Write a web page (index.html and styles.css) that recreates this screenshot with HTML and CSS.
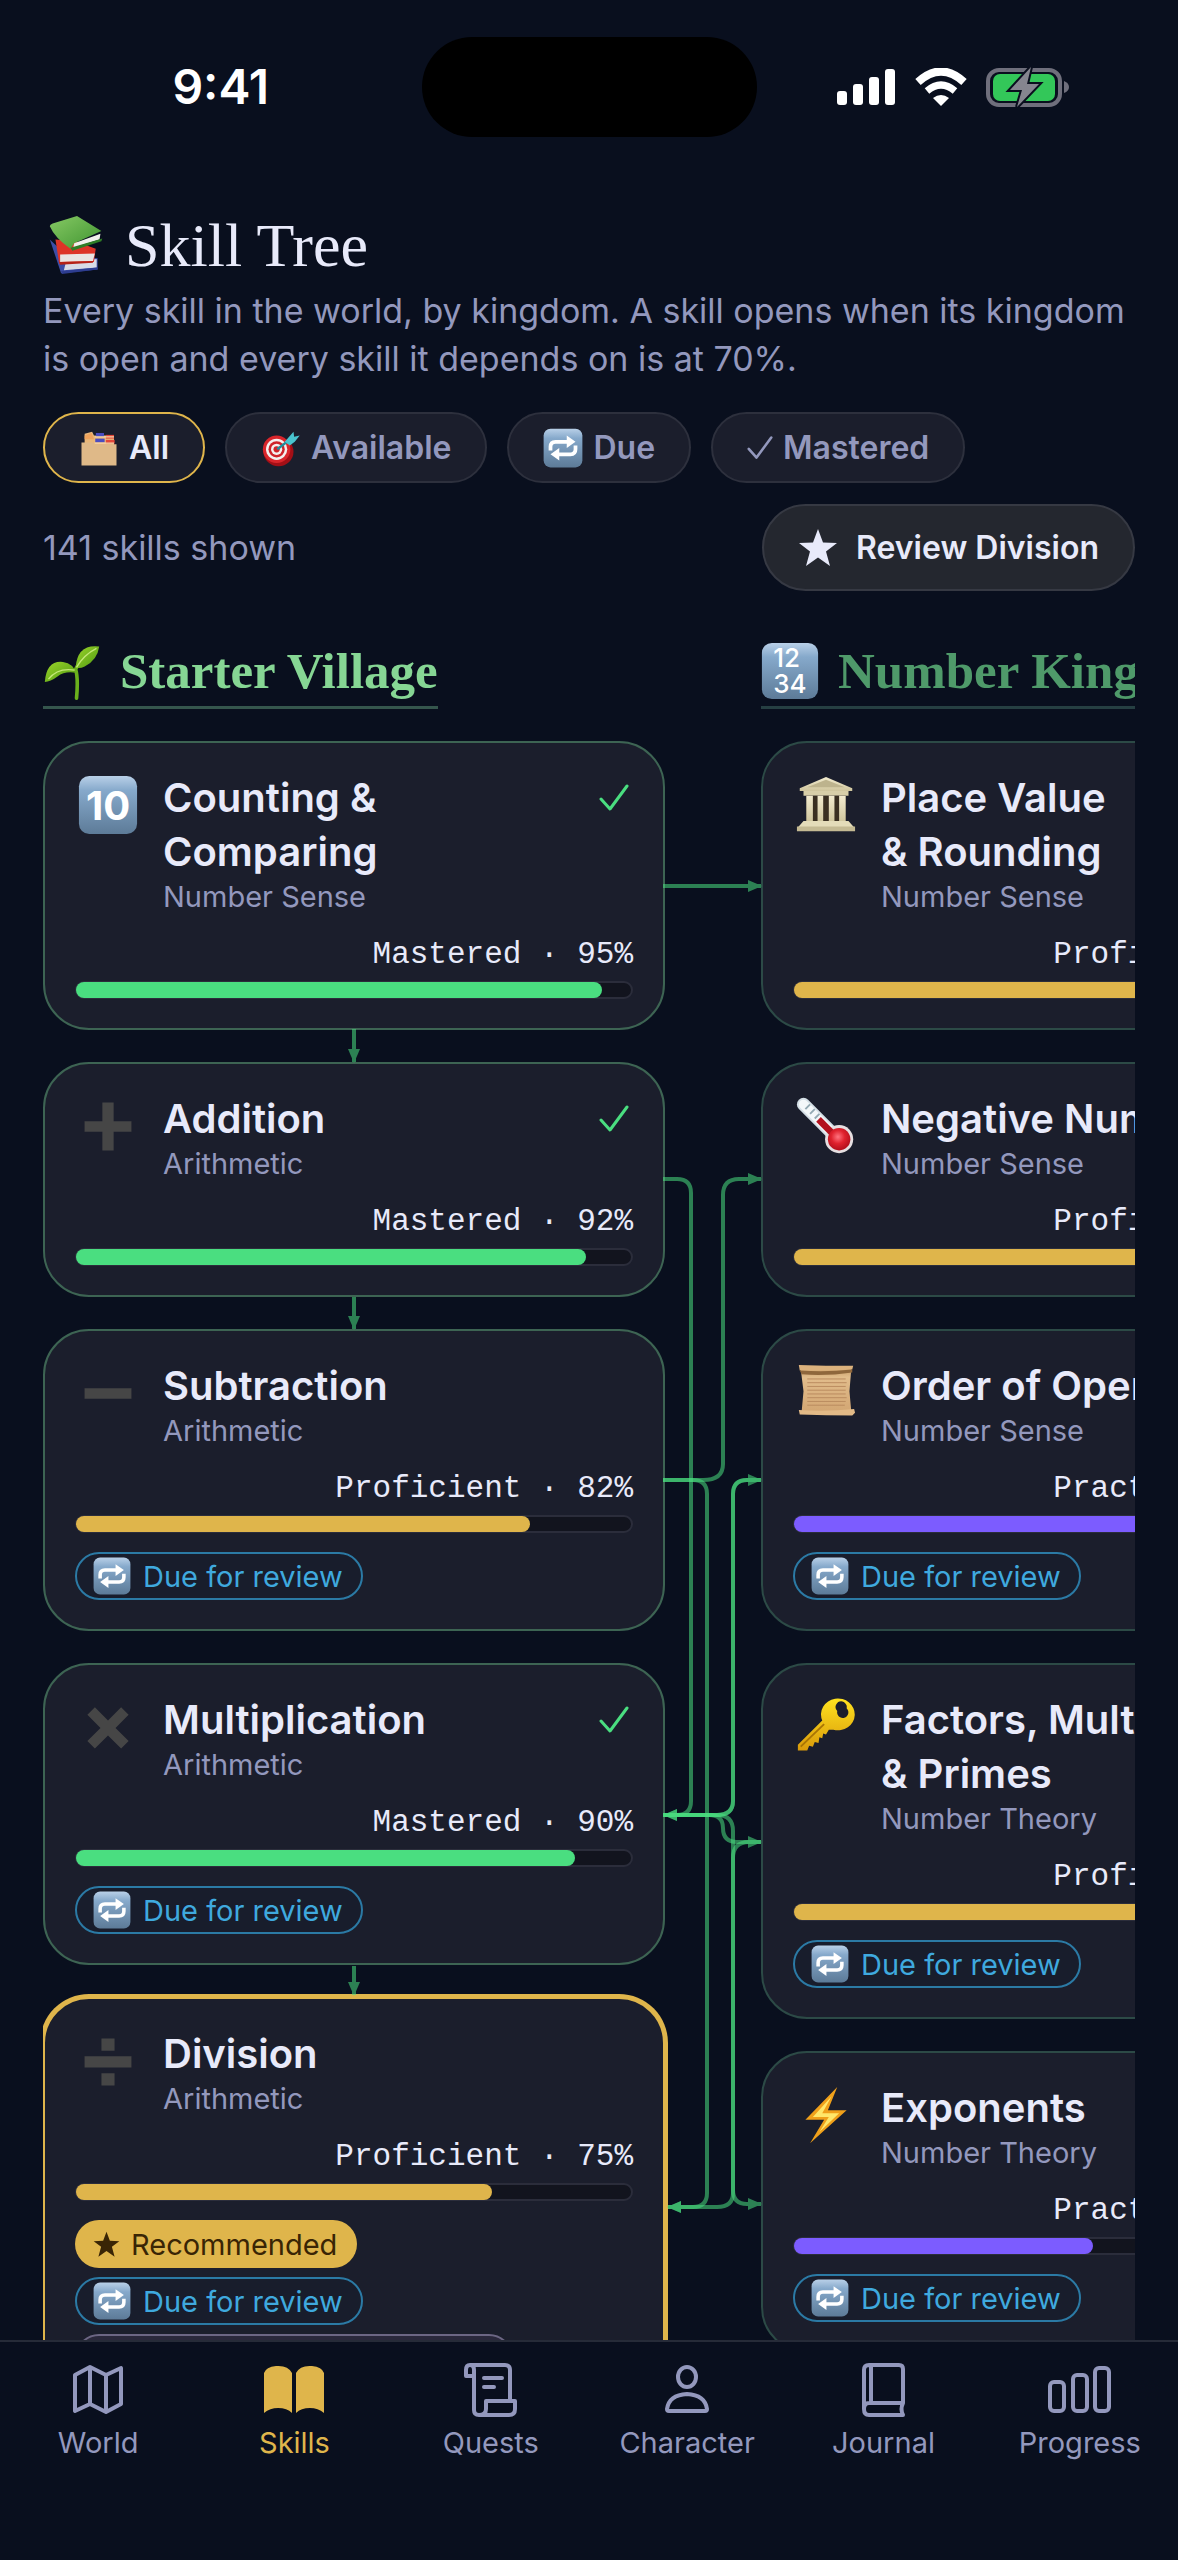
FILE: index.html
```html
<!DOCTYPE html>
<html lang="en">
<head>
<meta charset="utf-8">
<meta name="viewport" content="width=device-width, initial-scale=1">
<title>Skill Tree</title>
<link rel="stylesheet" href="styles.css">
</head>
<body>
<svg class="sprite" aria-hidden="true">
  <defs>
    <linearGradient id="tile" x1="0" y1="0" x2="0" y2="1"><stop offset="0" stop-color="#b9d0e8"/><stop offset=".25" stop-color="#86a9cb"/><stop offset="1" stop-color="#5d7b98"/></linearGradient>
    <linearGradient id="leaf" x1="0" y1="0" x2="1" y2="1"><stop offset="0" stop-color="#9bd42a"/><stop offset="1" stop-color="#4f9a12"/></linearGradient>
    <linearGradient id="cover" x1="0" y1="0" x2="1" y2="1"><stop offset="0" stop-color="#86c964"/><stop offset="1" stop-color="#3f9430"/></linearGradient>
    <linearGradient id="gold" x1="0" y1="0" x2="0" y2="1"><stop offset="0" stop-color="#ffe21f"/><stop offset="1" stop-color="#d99a0a"/></linearGradient>
    <linearGradient id="stone" x1="0" y1="0" x2="0" y2="1"><stop offset="0" stop-color="#f3ecd0"/><stop offset="1" stop-color="#cfc59d"/></linearGradient>
    <linearGradient id="paper" x1="0" y1="0" x2="0" y2="1"><stop offset="0" stop-color="#c79c68"/><stop offset=".2" stop-color="#e2bd8c"/><stop offset="1" stop-color="#d2a673"/></linearGradient>
    <radialGradient id="bulb" cx=".45" cy=".4" r=".6"><stop offset="0" stop-color="#ff7480"/><stop offset=".5" stop-color="#e0222e"/><stop offset="1" stop-color="#b30f1c"/></radialGradient>
    <marker id="arrow" markerWidth="14" markerHeight="12" refX="13" refY="6" orient="auto" markerUnits="userSpaceOnUse"><path d="M0 0L14 6L0 12z" fill="#4ade80"/></marker>
  </defs>
  <symbol id="i-books" viewBox="0 0 64 64">
    <path d="M3 26L15 62L54 58L54 46L20 42z" fill="#3c4da6"/><path d="M20 51L53 47L53 56L18 59z" fill="#d8dbe6"/><path d="M15 60L54 56L54 58L16 63z" fill="#2d3c8f"/>
    <path d="M9 26L13 52L50 50L52 36L30 28z" fill="#dd3427"/><path d="M14 42L51 41L49 49L14 50z" fill="#e9e4e2"/><path d="M13 50L49 49L49 51L14 53z" fill="#b52218"/>
    <path d="M3 12Q3 10 6 9L32 1L58 17L29 30L25 36Q8 24 3 12z" fill="url(#cover)"/><path d="M29 30L57 20L56 26L28 35z" fill="#f1f1ec"/><path d="M25 35L59 25L58 28L27 38z" fill="#2f7d26"/>
  </symbol>
  <symbol id="i-dividers" viewBox="0 0 64 64">
    <path d="M9 9L21 6L24 12L56 12L56 28H9z" fill="#e9b779"/><path d="M9 12L20 8L24 18H9z" fill="#f0a35c"/><path d="M27 8h13v6H27z" fill="#4a4cc0"/><path d="M43 11h13v6H43z" fill="#e2473a"/><path d="M26 17h15v6H26z" fill="#4a4cc0"/><path d="M43 19h14v6H43z" fill="#e2473a"/><path d="M25 14H56M25 24H56" stroke="#f5d6ab" stroke-width="2"/>
    <path d="M4 23H22L26 26H60V60H4z" fill="#dfb988"/>
  </symbol>
  <symbol id="i-target" viewBox="0 0 64 64">
    <ellipse cx="28" cy="38" rx="24" ry="23" fill="#a30f16"/><circle cx="25" cy="34" r="22" fill="#d9252b"/><circle cx="25" cy="34" r="17" fill="#f4efee"/><circle cx="25" cy="34" r="13" fill="#cf2329"/><circle cx="25" cy="34" r="9" fill="#f4efee"/><circle cx="25" cy="34" r="5" fill="#cf2329"/>
    <path d="M26 34L48 17" stroke="#1f8d9c" stroke-width="4"/><path d="M38 22L52 6L53 14L62 12L54 22L46 28z" fill="#49c4cf"/>
  </symbol>
  <symbol id="i-repeat" viewBox="0 0 64 64">
    <rect x="1" y="1" width="62" height="62" rx="11" fill="url(#tile)"/>
    <g fill="none" stroke="#fff" stroke-width="6"><path d="M12 36V30Q12 22 20 22H40M52 28V34Q52 42 44 42H24"/></g><path d="M38 12L52 22L38 32zM26 32L12 42L26 52z" fill="#fff"/>
  </symbol>
  <symbol id="i-check" viewBox="0 0 30 28"><path d="M2 15L11 25L28 2" fill="none" stroke="currentColor" stroke-width="3" stroke-linecap="round" stroke-linejoin="round"/></symbol>
  <symbol id="i-star" viewBox="0 0 40 40"><path d="M20 1L25 14.500L39 15L28 23.500L32 38L20 29.500L8 38L12 23.500L1 15L15 14.500z" fill="currentColor"/></symbol>
  <symbol id="i-seedling" viewBox="0 0 64 64">
    <path d="M37 62Q39 40 36 30Q40 22 45 18" fill="none" stroke="#6ab01c" stroke-width="4" stroke-linecap="round"/>
    <path d="M62 5Q38 2 36 28Q40 30 46 27Q60 20 62 5z" fill="url(#leaf)"/><path d="M2 44Q4 20 22 22Q34 24 36 34Q24 32 16 38Q8 44 2 44z" fill="url(#leaf)"/>
    <path d="M59 7Q45 14 37 28M6 41Q16 28 35 31" fill="none" stroke="#c4e878" stroke-width="1.500"/>
  </symbol>
  <symbol id="i-tile" viewBox="0 0 64 64"><rect x="1" y="1" width="62" height="62" rx="11" fill="url(#tile)"/></symbol>
  <symbol id="i-plus" viewBox="0 0 64 64"><path d="M26 7h12v20h19v11H38v20H26V38H7V27h19z" fill="#464646"/></symbol>
  <symbol id="i-minus" viewBox="0 0 64 64"><path d="M7 27h50v11H7z" fill="#464646"/></symbol>
  <symbol id="i-times" viewBox="0 0 64 64"><path d="M18 11L32 25L46 11L54 19L40 33L54 47L46 55L32 41L18 55L10 47L24 33L10 19z" fill="#464646"/></symbol>
  <symbol id="i-divide" viewBox="0 0 64 64"><path d="M25 8h14v13H25zM7 27h50v12H7zM25 45h14v13H25z" fill="#464646"/></symbol>
  <symbol id="i-temple" viewBox="0 0 64 64">
    <path d="M4 14L32 2L60 14V17H4z" fill="url(#stone)"/><path d="M12 13L32 5L52 13z" fill="#bdb38d"/><path d="M8 17H56V22H8z" fill="#d8cfa9"/>
    <path d="M11 22H53V52H11z" fill="#3a2f22"/>
    <path d="M11 22h7v28h-7zM23 22h6v28h-6zM35 22h6v28h-6zM46 22h7v28h-7z" fill="url(#stone)"/><path d="M8 49H56L63 57H1z" fill="#e4dcb9"/><path d="M1 55H63V60H1z" fill="#c4ba93"/>
  </symbol>
  <symbol id="i-thermo" viewBox="0 0 64 64">
    <path d="M8 9L42 43" stroke="#d4dfe6" stroke-width="14" stroke-linecap="round"/><path d="M8 9L40 41" stroke="#f4f8fa" stroke-width="10" stroke-linecap="round"/><circle cx="46" cy="46" r="15" fill="#e6dfe1"/><path d="M24 25L42 43" stroke="#b3121e" stroke-width="7"/><circle cx="46" cy="46" r="12" fill="url(#bulb)"/><path d="M15 9L10 14M20 14L15 19M25 19L20 24" stroke="#93a9b3" stroke-width="2"/>
  </symbol>
  <symbol id="i-scroll" viewBox="0 0 64 64">
    <path d="M5 6H59L57 30L59 52H6L8 30z" fill="url(#paper)"/><path d="M3 2Q32 3 61 3L60 7Q32 9 4 8z" fill="#dcb27d"/><path d="M4 8Q32 10 60 7V10Q32 14 6 12z" fill="#8f673c"/><path d="M3 50Q32 52 62 49L63 53L60 56Q32 56 4 55z" fill="#e2ba87"/>
    <path d="M12 17H53M12 21H54M12 25H53M12 29H53M12 33H53M12 37H54M12 41H53M12 45H52" stroke="#b98a5e" stroke-width="1"/>
  </symbol>
  <symbol id="i-key" viewBox="0 0 64 64">
    <path fill-rule="evenodd" d="M28 25A18 17 0 1 1 40 35L35 35L32 40L29 39L28 44L25 43L24 49L20 48L18 53L14 52L12 57L2 57V51z M54 12A6 6 0 1 0 44 15A6 6 0 1 0 54 12z" fill="url(#gold)"/><path d="M5 53L30 29" stroke="#a97405" stroke-width="2"/>
  </symbol>
  <symbol id="i-bolt" viewBox="0 0 64 64"><path d="M44 2L10 37H30L15 62L54 27H34z" fill="#f0a01a"/><path d="M38 12L18 34H35L25 50L46 30H28z" fill="#ffe76a"/></symbol>
  <symbol id="n-map" viewBox="0 0 60 60"><path d="M7 16L22 8L38 16L53 9V45L38 53L22 45L7 52zM22 8V45M38 16V53" fill="none" stroke="currentColor" stroke-width="4" stroke-linejoin="round"/></symbol>
  <symbol id="n-open" viewBox="0 0 60 60"><path d="M0 14Q2 8 12 7Q24 6 28 14V54Q23 49 14 49Q6 49 0 54zM60 14Q58 8 48 7Q36 6 32 14V54Q37 49 46 49Q54 49 60 54z" fill="currentColor"/></symbol>
  <symbol id="n-scroll" viewBox="0 0 60 60"><path d="M13 17H5V11Q5 6 9 6H44Q49 6 49 11V42M9 6Q13 6 13 11V51Q13 56 18 56H48Q54 56 54 50V42H25V50Q25 56 18 56M23 19H41M23 28H33" fill="none" stroke="currentColor" stroke-width="4" stroke-linejoin="round" stroke-linecap="round"/></symbol>
  <symbol id="n-person" viewBox="0 0 60 60"><ellipse cx="30" cy="18" rx="9" ry="10" fill="none" stroke="currentColor" stroke-width="4"/><path d="M10 50Q12 36 30 35Q48 36 50 50Q50 52 48 52H12Q10 52 10 50z" fill="none" stroke="currentColor" stroke-width="4"/></symbol>
  <symbol id="n-book" viewBox="0 0 60 60"><path d="M50 44H16Q11 44 11 50Q11 56 16 56H50Q47 50 50 44V10Q50 6 46 6H16Q11 6 11 11V50M18 6V44" fill="none" stroke="currentColor" stroke-width="4" stroke-linejoin="round"/></symbol>
  <symbol id="n-bars" viewBox="0 0 64 60"><g fill="none" stroke="currentColor" stroke-width="4"><rect x="2" y="23" width="14" height="29" rx="4"/><rect x="25" y="16" width="14" height="36" rx="4"/><rect x="47" y="9" width="14" height="43" rx="4"/></g></symbol>
</svg>

<div class="app">
  <header class="status">
    <time class="status-time">9:41</time>
    <div class="island"></div>
    <div class="status-icons">
      <svg width="60" height="38" viewBox="0 0 60 38" fill="#fff" aria-label="Signal"><rect x="1" y="23" width="10" height="14" rx="3"/><rect x="17" y="16" width="10" height="21" rx="3"/><rect x="33" y="9" width="10" height="28" rx="3"/><rect x="49" y="1" width="10" height="36" rx="3"/></svg>
      <svg width="52" height="38" viewBox="0 0 52 38" aria-label="Wi-Fi"><path d="M3 14Q26 -7 49 14" fill="none" stroke="#fff" stroke-width="8"/><path d="M12 23Q26 11 40 23" fill="none" stroke="#fff" stroke-width="7"/><path d="M18 30Q26 24 34 30L26 38z" fill="#fff"/></svg>
      <svg width="84" height="40" viewBox="0 0 84 40" aria-label="Battery charging"><rect x="2" y="3" width="72" height="35" rx="11" fill="none" stroke="#6f6f7c" stroke-width="4"/><path d="M78 14q5 2 5 6t-5 6z" fill="#6f6f7c"/><rect x="7" y="7" width="62" height="27" rx="7" fill="#33c759"/><path d="M45 0L24 23H36L31 40L53 17H41z" fill="#85858f" stroke="#0a0f1e" stroke-width="4" paint-order="stroke"/></svg>
    </div>
  </header>

  <main class="page">
    <h1 class="title"><svg class="title-icon"><use href="#i-books"/></svg>Skill Tree</h1>
    <p class="lead">Every skill in the world, by kingdom. A skill opens when its kingdom is open and every skill it depends on is at 70%.</p>
    <div class="filters">
      <button class="filter is-active" aria-pressed="true"><svg class="filter-icon"><use href="#i-dividers"/></svg>All</button>
      <button class="filter"><svg class="filter-icon"><use href="#i-target"/></svg>Available</button>
      <button class="filter"><svg class="filter-icon"><use href="#i-repeat"/></svg>Due</button>
      <button class="filter"><svg class="filter-check"><use href="#i-check"/></svg>Mastered</button>
    </div>
    <div class="summary">
      <span>141 skills shown</span>
      <button class="review"><svg class="review-icon"><use href="#i-star"/></svg>Review Division</button>
    </div>

    <div class="viewport">
      <div class="tree">
        <section class="kingdom">
          <h2 class="kingdom-title"><svg class="kingdom-icon"><use href="#i-seedling"/></svg>Starter Village</h2>
          <article class="card">
            <div class="card-head"><span class="glyph"><svg><use href="#i-tile"/></svg><b>10</b></span><div class="names"><h3>Counting &amp; Comparing</h3><p>Number Sense</p></div><svg class="done"><use href="#i-check"/></svg></div>
            <p class="level">Mastered · 95%</p><div class="track"><div class="fill green" style="width:95%"></div></div>
          </article>
          <article class="card">
            <div class="card-head"><span class="glyph"><svg><use href="#i-plus"/></svg></span><div class="names"><h3>Addition</h3><p>Arithmetic</p></div><svg class="done"><use href="#i-check"/></svg></div>
            <p class="level">Mastered · 92%</p><div class="track"><div class="fill green" style="width:92%"></div></div>
          </article>
          <article class="card">
            <div class="card-head"><span class="glyph"><svg><use href="#i-minus"/></svg></span><div class="names"><h3>Subtraction</h3><p>Arithmetic</p></div></div>
            <p class="level">Proficient · 82%</p><div class="track"><div class="fill gold" style="width:82%"></div></div>
            <div class="tags"><span class="tag due"><svg class="tag-icon"><use href="#i-repeat"/></svg>Due for review</span></div>
          </article>
          <article class="card">
            <div class="card-head"><span class="glyph"><svg><use href="#i-times"/></svg></span><div class="names"><h3>Multiplication</h3><p>Arithmetic</p></div><svg class="done"><use href="#i-check"/></svg></div>
            <p class="level">Mastered · 90%</p><div class="track"><div class="fill green" style="width:90%"></div></div>
            <div class="tags"><span class="tag due"><svg class="tag-icon"><use href="#i-repeat"/></svg>Due for review</span></div>
          </article>
          <article class="card is-next">
            <div class="card-head"><span class="glyph"><svg><use href="#i-divide"/></svg></span><div class="names"><h3>Division</h3><p>Arithmetic</p></div></div>
            <p class="level">Proficient · 75%</p><div class="track"><div class="fill gold" style="width:75%"></div></div>
            <div class="tags"><span class="tag recommended"><svg class="tag-star"><use href="#i-star"/></svg>Recommended</span><span class="tag due"><svg class="tag-icon"><use href="#i-repeat"/></svg>Due for review</span><span class="tag more"></span></div>
          </article>
        </section>

        <section class="kingdom dim">
          <h2 class="kingdom-title"><span class="kingdom-tile"><svg class="kingdom-icon"><use href="#i-tile"/></svg><b>12<br>34</b></span>Number Kingdom</h2>
          <article class="card">
            <div class="card-head"><span class="glyph"><svg><use href="#i-temple"/></svg></span><div class="names"><h3>Place Value &amp;&nbsp;Rounding</h3><p>Number Sense</p></div></div>
            <p class="level">Proficient · 85%</p><div class="track"><div class="fill gold" style="width:85%"></div></div>
          </article>
          <article class="card">
            <div class="card-head"><span class="glyph"><svg><use href="#i-thermo"/></svg></span><div class="names"><h3>Negative Numbers</h3><p>Number Sense</p></div></div>
            <p class="level">Proficient · 80%</p><div class="track"><div class="fill gold" style="width:80%"></div></div>
          </article>
          <article class="card">
            <div class="card-head"><span class="glyph"><svg><use href="#i-scroll"/></svg></span><div class="names"><h3>Order of Operations</h3><p>Number Sense</p></div></div>
            <p class="level">Practicing · 68%</p><div class="track"><div class="fill purple" style="width:68%"></div></div>
            <div class="tags"><span class="tag due"><svg class="tag-icon"><use href="#i-repeat"/></svg>Due for review</span></div>
          </article>
          <article class="card">
            <div class="card-head"><span class="glyph"><svg><use href="#i-key"/></svg></span><div class="names"><h3>Factors, Multiples &amp;&nbsp;Primes</h3><p>Number Theory</p></div></div>
            <p class="level">Proficient · 78%</p><div class="track"><div class="fill gold" style="width:78%"></div></div>
            <div class="tags"><span class="tag due"><svg class="tag-icon"><use href="#i-repeat"/></svg>Due for review</span></div>
          </article>
          <article class="card">
            <div class="card-head"><span class="glyph"><svg><use href="#i-bolt"/></svg></span><div class="names"><h3>Exponents</h3><p>Number Theory</p></div></div>
            <p class="level">Practicing · 54%</p><div class="track"><div class="fill purple" style="width:54%"></div></div>
            <div class="tags"><span class="tag due"><svg class="tag-icon"><use href="#i-repeat"/></svg>Due for review</span></div>
          </article>
        </section>

        <svg class="links" width="1340" height="1700" viewBox="0 0 1340 1700" aria-hidden="true">
          <g transform="translate(-43 -641)">
            <path d="M354 1029V1062"/><path d="M354 1297V1329"/><path d="M354 1966V1995"/>
            <path d="M663 886H761"/>
            <path d="M663 1179H677Q691 1179 691 1193V1801Q691 1815 677 1815H664"/>
            <path d="M663 1480H693Q707 1480 707 1494V2193Q707 2207 693 2207H668"/>
            <path d="M663 1480H703Q723 1480 723 1464V1195Q723 1179 739 1179H761"/>
            <path d="M663 1815H717Q733 1815 733 1801V1494Q733 1480 747 1480H761"/>
            <path d="M663 1815H709Q723 1815 723 1828Q723 1842 737 1842H761"/>
            <path d="M663 1815H717Q733 1815 733 1831V2190Q733 2204 747 2204H761"/>
            <path d="M761 1842H749Q733 1842 733 1858V2193Q733 2207 717 2207H668"/>
            <path d="M761 1480H747Q733 1480 733 1494V1801Q733 1815 717 1815H664"/>
          </g>
        </svg>
      </div>
    </div>
  </main>

  <nav class="tabs">
    <a class="tab" href="#world"><svg><use href="#n-map"/></svg>World</a>
    <a class="tab is-current" href="#skills"><svg><use href="#n-open"/></svg>Skills</a>
    <a class="tab" href="#quests"><svg><use href="#n-scroll"/></svg>Quests</a>
    <a class="tab" href="#character"><svg><use href="#n-person"/></svg>Character</a>
    <a class="tab" href="#journal"><svg><use href="#n-book"/></svg>Journal</a>
    <a class="tab" href="#progress"><svg class="wide"><use href="#n-bars"/></svg>Progress</a>
  </nav>
</div>
</body>
</html>
```
FILE: styles.css
```css
:root {
  --bg: #090f1e;
  --card: #1b1e2c;
  --text: #e8eafa;
  --muted: #9398bd;
  --gold: #dfb54b;
  --green: #4ade80;
  --sky: #3fa9de;
}

* { box-sizing: border-box; }

body {
  margin: 0;
  background: var(--bg);
  color: var(--text);
  font-family: Inter, "Liberation Sans", sans-serif;
}

h1, h2, h3, p { margin: 0; }

button { font: inherit; cursor: pointer; }

.sprite { position: absolute; width: 0; height: 0; }

.app {
  display: flex;
  flex-direction: column;
  height: 100vh;
  overflow: hidden;
}

/* Status bar */
.status {
  display: grid;
  grid-template-columns: 1fr auto 1fr;
  align-items: center;
  justify-items: center;
  flex: none;
  height: 173px;
}

.status-time {
  padding-left: 20px;
  color: #fff;
  font-size: 48px;
  font-weight: 600;
}

.island {
  width: 335px;
  height: 100px;
  border-radius: 50px;
  background: #000;
}

.status-icons {
  display: flex;
  align-items: center;
  gap: 19px;
  padding-right: 28px;
}

/* Page header */
.page {
  display: flex;
  flex-direction: column;
  flex: 1;
  min-height: 0;
  padding: 36px 43px 0;
}

.title {
  display: flex;
  align-items: center;
  gap: 18px;
  font: 400 62px/72px "Liberation Serif", serif;
}

.title-icon { width: 60px; height: 60px; margin-left: 4px; }

.lead {
  margin-top: 6px;
  color: var(--muted);
  font-size: 34px;
  line-height: 48px;
}

.filters {
  display: flex;
  gap: 20px;
  margin-top: 29px;
}

.filter {
  display: flex;
  align-items: center;
  gap: 10px;
  height: 71px;
  padding: 0 34px;
  border: 2px solid #2d303d;
  border-radius: 36px;
  background: var(--card);
  color: var(--muted);
  font-size: 32px;
  font-weight: 600;
}

.filter.is-active { border-color: var(--gold); color: var(--text); }

.filter-icon { width: 40px; height: 40px; }

.filter-check { width: 26px; height: 26px; }

.summary {
  display: flex;
  align-items: center;
  justify-content: space-between;
  margin-top: 21px;
  color: var(--muted);
  font-size: 34px;
}

.review {
  display: flex;
  align-items: center;
  gap: 18px;
  height: 87px;
  padding: 0 34px;
  border: 2px solid #363943;
  border-radius: 44px;
  background: #24272f;
  color: var(--text);
  font-size: 32px;
  font-weight: 600;
}

.review-icon { width: 40px; height: 40px; }

/* Tree */
.viewport {
  flex: 1;
  min-height: 0;
  margin-top: 50px;
  overflow: hidden;
}

.tree {
  position: relative;
  display: flex;
  gap: 96px;
  width: max-content;
}

.kingdom {
  display: flex;
  flex-direction: column;
  gap: 32px;
  width: 622px;
  --edge: #3d6453;
  --name: #86d694;
  --rule: #35564d;
}

.kingdom.dim {
  --edge: #2c4a46;
  --name: #4f9a6a;
  --rule: #263f42;
}

.kingdom-title {
  display: flex;
  align-items: center;
  align-self: flex-start;
  gap: 19px;
  padding-bottom: 5px;
  border-bottom: 3px solid var(--rule);
  color: var(--name);
  font: 700 51px/60px "Liberation Serif", serif;
  white-space: nowrap;
}

.kingdom-icon { display: block; width: 58px; height: 58px; }

.kingdom-tile, .glyph { display: grid; place-items: center; }

.kingdom-tile > *, .glyph > * { grid-area: 1 / 1; }

.kingdom-tile b {
  color: #fff;
  font: 500 26px/26px Inter, sans-serif;
}

.card {
  padding: 28px 30px 29px;
  border: 2px solid var(--edge);
  border-radius: 46px;
  background: var(--card);
}

.card.is-next {
  border-color: var(--gold);
  box-shadow: 0 0 0 3px var(--gold);
}

.card-head {
  display: flex;
  align-items: flex-start;
  gap: 22px;
}

.glyph {
  flex: none;
  width: 66px;
  padding-top: 4px;
}

.glyph svg { width: 60px; height: 60px; }

.glyph b { color: #fff; font-size: 40px; font-weight: 700; }

.names { flex: 1; max-width: 300px; }

.dim .names { max-width: 420px; }

.names h3 {
  font-size: 40px;
  font-weight: 600;
  line-height: 54px;
}

.names p {
  color: var(--muted);
  font-size: 29px;
  line-height: 36px;
}

.done {
  width: 30px;
  height: 28px;
  margin: 13px 4px 0 auto;
  color: var(--green);
}

.level {
  margin-top: 22px;
  font: 31px/36px "Liberation Mono", monospace;
  text-align: right;
}

.track {
  height: 18px;
  margin-top: 8px;
  border: 2px solid #2b2d3b;
  border-radius: 9px;
  background: #12141e;
}

.fill { height: 16px; margin: -1px; border-radius: 8px; }

.fill.green { background: var(--green); }
.fill.gold { background: var(--gold); }
.fill.purple { background: #7c5cff; }

.tags {
  display: flex;
  flex-direction: column;
  align-items: flex-start;
  gap: 9px;
  margin-top: 19px;
}

.tag {
  display: flex;
  align-items: center;
  height: 48px;
  padding: 0 18px 0 16px;
  border: 2px solid transparent;
  border-radius: 24px;
  font-size: 29px;
}

.tag.due {
  gap: 12px;
  border-color: #2b7aa5;
  background: #181d2c;
  color: var(--sky);
}

.tag.recommended {
  gap: 11px;
  background: var(--gold);
  color: #392505;
}

.tag.more { width: 438px; border-color: #6c6684; background: #2a283c; }

.tag-icon { width: 38px; height: 38px; }

.tag-star { width: 27px; height: 27px; }

.links {
  position: absolute;
  top: 0;
  left: 0;
  pointer-events: none;
}

.links path {
  fill: none;
  stroke: var(--green);
  stroke-width: 4;
  opacity: .55;
  marker-end: url(#arrow);
}

/* Tab bar */
.tabs {
  display: grid;
  grid-template-columns: repeat(6, 1fr);
  flex: none;
  height: 220px;
  padding-top: 17px;
  border-top: 2px solid #262b38;
}

.tab {
  display: flex;
  flex-direction: column;
  align-items: center;
  color: var(--muted);
  font-size: 29px;
  line-height: 36px;
  text-decoration: none;
}

.tab.is-current { color: var(--gold); }

.tab svg { width: 60px; height: 60px; margin-bottom: 6px; }

.tab .wide { width: 64px; }
```
